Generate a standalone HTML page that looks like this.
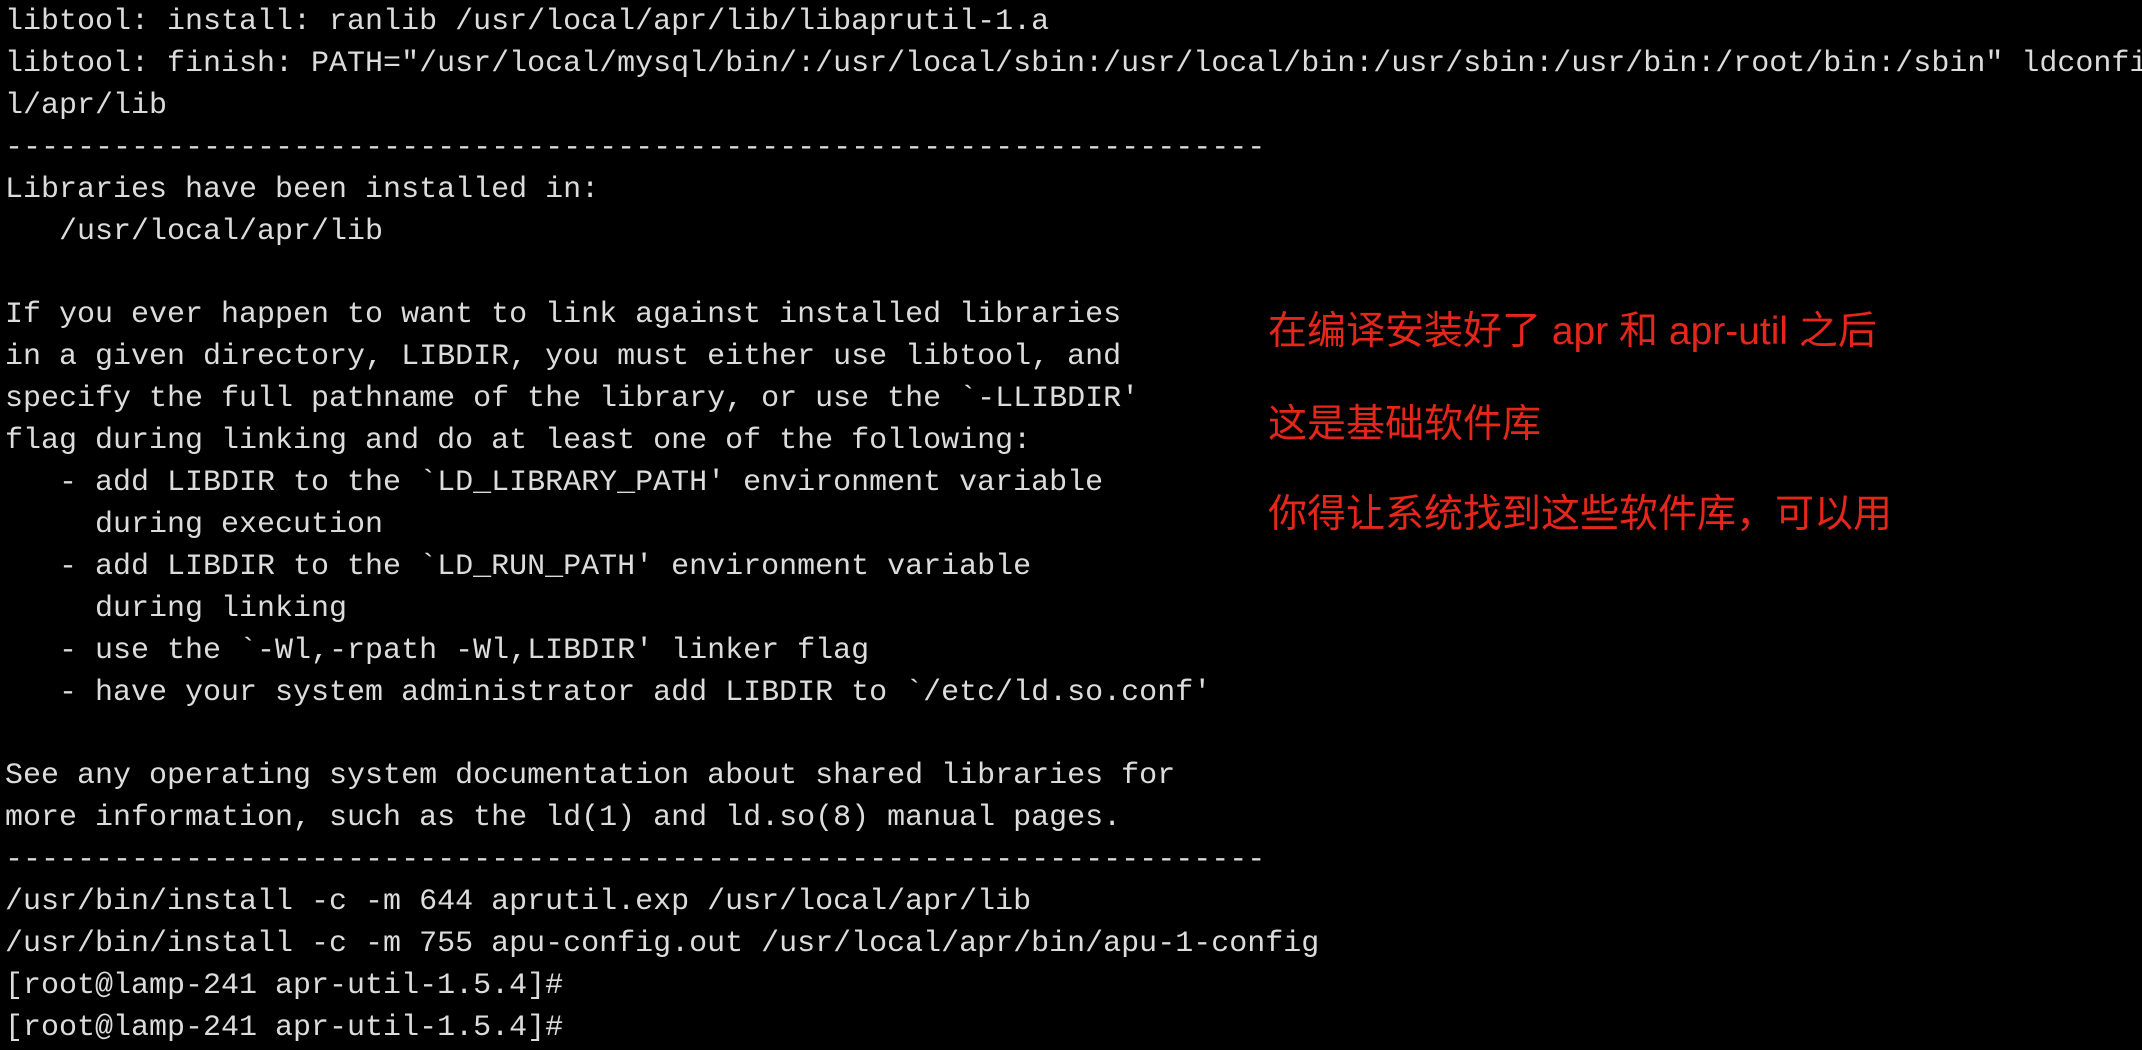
<!DOCTYPE html>
<html><head><meta charset="utf-8"><style>
html,body{margin:0;padding:0;background:#000;width:2142px;height:1046px;overflow:hidden}
pre{margin:0;position:absolute;left:5px;top:2px;width:2137px;overflow:hidden;font-family:"Liberation Mono","DejaVu Sans Mono",monospace;font-size:30px;line-height:41.9px;color:#dcdcdc;white-space:pre}
.r{position:absolute;left:1268px;font-family:"Liberation Sans","Noto Sans CJK SC",sans-serif;font-size:39px;color:#e5261b;line-height:40px;white-space:nowrap}
</style></head><body>
<pre>libtool: install: ranlib /usr/local/apr/lib/libaprutil-1.a
libtool: finish: PATH="/usr/local/mysql/bin/:/usr/local/sbin:/usr/local/bin:/usr/sbin:/usr/bin:/root/bin:/sbin" ldconfi
l/apr/lib
----------------------------------------------------------------------
Libraries have been installed in:
   /usr/local/apr/lib

If you ever happen to want to link against installed libraries
in a given directory, LIBDIR, you must either use libtool, and
specify the full pathname of the library, or use the `-LLIBDIR'
flag during linking and do at least one of the following:
   - add LIBDIR to the `LD_LIBRARY_PATH' environment variable
     during execution
   - add LIBDIR to the `LD_RUN_PATH' environment variable
     during linking
   - use the `-Wl,-rpath -Wl,LIBDIR' linker flag
   - have your system administrator add LIBDIR to `/etc/ld.so.conf'

See any operating system documentation about shared libraries for
more information, such as the ld(1) and ld.so(8) manual pages.
----------------------------------------------------------------------
/usr/bin/install -c -m 644 aprutil.exp /usr/local/apr/lib
/usr/bin/install -c -m 755 apu-config.out /usr/local/apr/bin/apu-1-config
[root@lamp-241 apr-util-1.5.4]#
[root@lamp-241 apr-util-1.5.4]#</pre>
<div class="r" style="top:312px">在编译安装好了 apr 和 apr-util 之后</div>
<div class="r" style="top:405px">这是基础软件库</div>
<div class="r" style="top:495px">你得让系统找到这些软件库，可以用</div>
</body></html>
